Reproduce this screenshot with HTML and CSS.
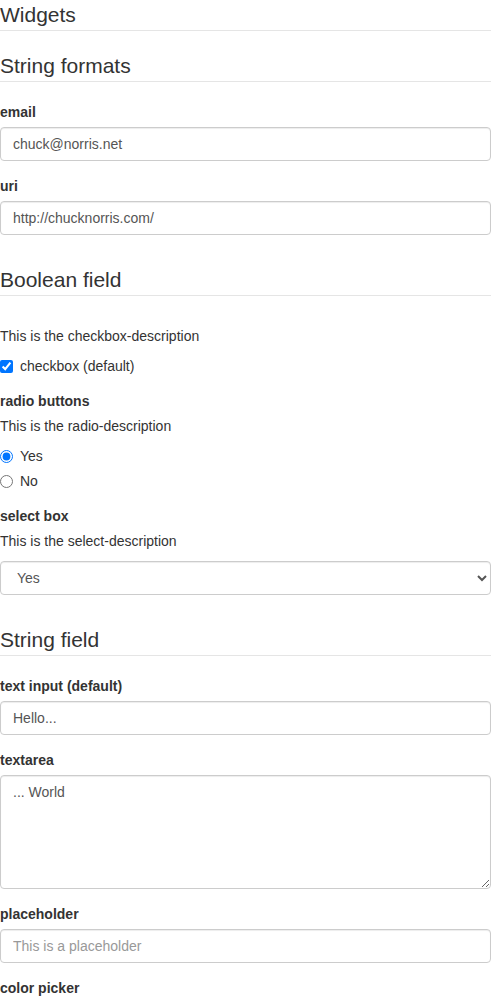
FILE: index.html
```html
<!DOCTYPE html>
<html>
<head>
<meta charset="utf-8">
<link rel="stylesheet" href="styles.css">
</head>
<body>
<form class="rjsf">
  <div class="form-group">
    <fieldset class="fs">
      <legend class="legend">Widgets</legend>
      <div class="form-group">
        <fieldset class="fs">
          <legend class="legend">String formats</legend>
          <div class="form-group">
            <label class="control-label" for="email">email</label>
            <input class="form-control" id="email" type="email" value="chuck@norris.net">
          </div>
          <div class="form-group">
            <label class="control-label" for="uri">uri</label>
            <input class="form-control" id="uri" type="url" value="http://chucknorris.com/">
          </div>
        </fieldset>
      </div>
      <div class="form-group">
        <fieldset class="fs">
          <legend class="legend">Boolean field</legend>
          <div class="form-group">
            <div class="checkbox">
              <p class="field-description">This is the checkbox-description</p>
              <label class="check-label"><input class="check-input" type="checkbox" checked><span>checkbox (default)</span></label>
            </div>
          </div>
          <div class="form-group">
            <label class="control-label">radio buttons</label>
            <p class="field-description">This is the radio-description</p>
            <div class="radio-group">
              <div class="radio"><label class="check-label"><input class="check-input" type="radio" name="rb" checked><span>Yes</span></label></div>
              <div class="radio"><label class="check-label"><input class="check-input" type="radio" name="rb"><span>No</span></label></div>
            </div>
          </div>
          <div class="form-group">
            <label class="control-label" for="sel">select box</label>
            <p class="field-description">This is the select-description</p>
            <select class="form-control select" id="sel">
              <option selected>Yes</option>
              <option>No</option>
            </select>
          </div>
        </fieldset>
      </div>
      <div class="form-group">
        <fieldset class="fs">
          <legend class="legend">String field</legend>
          <div class="form-group">
            <label class="control-label" for="ti">text input (default)</label>
            <input class="form-control" id="ti" type="text" value="Hello...">
          </div>
          <div class="form-group">
            <label class="control-label" for="ta">textarea</label>
            <textarea class="form-control textarea" id="ta" rows="5">... World</textarea>
          </div>
          <div class="form-group">
            <label class="control-label" for="ph">placeholder</label>
            <input class="form-control" id="ph" type="text" placeholder="This is a placeholder">
          </div>
          <div class="form-group">
            <label class="control-label" for="cp">color picker</label>
            <input class="form-control" id="cp" type="text" value="#151ce6">
          </div>
        </fieldset>
      </div>
    </fieldset>
  </div>
</form>
</body>
</html>
```
FILE: styles.css
```css
* { box-sizing: border-box; }
html, body { margin: 0; padding: 0; }
body {
  font-family: "Liberation Sans", Arial, Helvetica, sans-serif;
  font-size: 14px;
  line-height: 1.42857143;
  color: #333;
  background: #fff;
}
.rjsf { margin: 0; }
.fs { margin: 0; padding: 0; border: 0; min-width: 0; }
.legend {
  display: block;
  width: 100%;
  padding: 0;
  margin-bottom: 20px;
  font-size: 21px;
  line-height: inherit;
  color: #333;
  border: 0;
  border-bottom: 1px solid #e5e5e5;
}
.form-group { margin-bottom: 15px; }
.control-label {
  display: inline-block;
  max-width: 100%;
  margin-bottom: 5px;
  font-weight: 700;
}
.field-description { margin: 0 0 10px; }
.form-control {
  display: block;
  width: 100%;
  height: 34px;
  padding: 6px 12px;
  font-family: inherit;
  font-size: 14px;
  line-height: 1.42857143;
  color: #555;
  background-color: #fff;
  border: 1px solid #ccc;
  border-radius: 4px;
  box-shadow: inset 0 1px 1px rgba(0,0,0,.075);
  margin: 0;
}
.form-control::placeholder { color: #999; opacity: 1; }
.textarea { height: auto; }
.select { padding-left: 12px; }
.checkbox, .radio {
  position: relative;
  display: block;
  margin-top: 10px;
  margin-bottom: 10px;
}
.radio + .radio { margin-top: -5px; }
.check-label {
  display: block;
  min-height: 20px;
  padding-left: 20px;
  margin-bottom: 0;
  font-weight: 400;
  cursor: pointer;
}
.check-input {
  position: absolute;
  margin: 4px 0 0 -20px;
  width: 13px;
  height: 13px;
}
```
